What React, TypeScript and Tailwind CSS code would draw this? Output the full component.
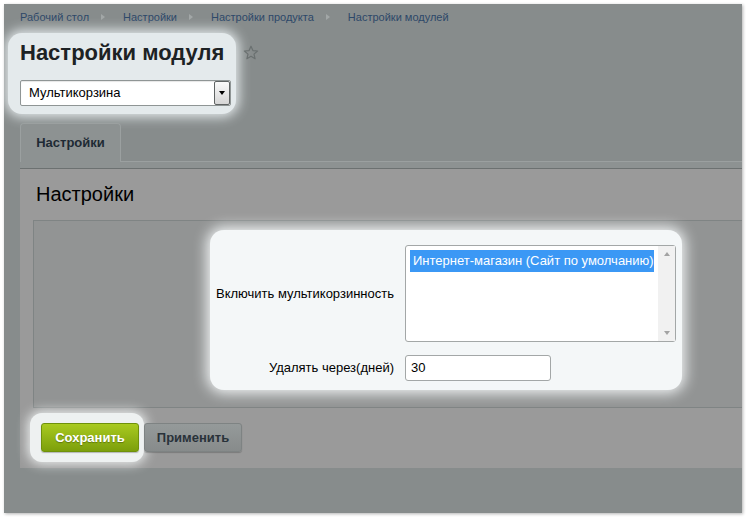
const crumbs = ['Рабочий стол', 'Настройки', 'Настройки продукта', 'Настройки модулей'];

const CrumbArrow = () => (
    <span className="ml-[12px] mr-[18px] inline-block h-0 w-0 border-y-[3.5px] border-l-[4px] border-y-transparent border-l-[#a2a7a7]" />
);

export default function App() {
    return (
        <div className="w-[747px] h-[517px] bg-white pt-[4px] pl-[4px] font-['Liberation_Sans',Arial,sans-serif]">
            <div className="w-[738px] h-[509px] bg-[#878c8c] shadow-[1px_1px_3px_rgba(0,0,0,0.3)] overflow-hidden">
                {/* breadcrumbs */}
                <div className="mt-[3px] h-[20px] pl-[16px] flex items-center text-[11px] text-[#2d4869]">
                    {crumbs.map((c, i) => (
                        <span key={c} className="flex items-center">
                            {c}
                            {i < crumbs.length - 1 && <CrumbArrow />}
                        </span>
                    ))}
                </div>

                {/* title + module select */}
                <div className="mt-[6px] pl-[4px] flex items-start">
                    <div className="w-[228px] pl-[12px] pt-[7px] pb-[8px] rounded-[14px] bg-[#e4eaec] shadow-[0_0_12px_3px_#e4eaec]">
                        <h1 className="text-[22px] leading-[26px] font-bold text-[#1d2224] whitespace-nowrap">Настройки модуля</h1>
                        <div className="mt-[14px] w-[211px] h-[26px] flex items-center bg-white border border-[#8f9595] rounded-[2px] shadow-[inset_0_1px_1px_rgba(0,0,0,0.1)]">
                            <span className="flex-1 pl-[8px] text-[13px] text-black">Мультикорзина</span>
                            <span className="w-[16px] h-[24px] flex items-center justify-center border border-[#5f6363] rounded-[2px] bg-linear-to-b from-[#fafafa] to-[#d6d6d6]">
                                <span className="inline-block h-0 w-0 border-x-[3.5px] border-t-[4px] border-x-transparent border-t-black" />
                            </span>
                        </div>
                    </div>
                    <svg className="ml-[7px] mt-[12px]" width="16" height="16" viewBox="0 0 16 16">
                        <polygon
                            points="8,1.2 9.9,5.6 14.6,6 11,9.1 12.1,13.8 8,11.3 3.9,13.8 5,9.1 1.4,6 6.1,5.6"
                            fill="none"
                            stroke="#6a7070"
                            strokeWidth="1.2"
                            strokeLinejoin="round"
                        />
                    </svg>
                </div>

                {/* tabs */}
                <div className="mt-[9px] pl-[16px] flex">
                    <div className="w-[101px] h-[39px] flex items-center justify-center rounded-t-[4px] border border-b-0 border-[#9ba0a0] bg-[#8d9292] text-[13px] font-bold text-[#1e2a34]">
                        Настройки
                    </div>
                    <div className="flex-1 border-b border-[#9ba0a0]" />
                </div>
                <div className="ml-[16px] h-[7px] bg-[#8d9292] border-b border-[#6c7171]" />

                {/* card */}
                <div className="ml-[16px] h-[299px] bg-[#9a9a9a] pt-[13px]">
                    <h2 className="pl-[16px] text-[20px] leading-[24px] text-black">Настройки</h2>
                    <div className="ml-[13px] mt-[14px] h-[188px] border-l border-t border-b border-[#7f8484] bg-[#929494]">
                        <div className="ml-[176px] mt-[9px] w-[472px] h-[160px] pt-[15px] rounded-[14px] bg-[#f4f7f8] shadow-[0_0_14px_3px_#f4f7f8]">
                            <div className="flex items-center">
                                <div className="w-[184px] text-right text-[13px] text-black">Включить мультикорзинность</div>
                                <div className="ml-[11px] w-[271px] h-[97px] flex bg-white border border-[#a3a7a7] rounded-[3px] pl-[4px] pt-[4px]">
                                    <div className="w-[244px] h-[22px] bg-[#3b98f5] pl-[3px] text-[13px] leading-[22px] text-white whitespace-nowrap">
                                        Интернет-магазин (Сайт по умолчанию)
                                    </div>
                                    <div className="ml-auto -mt-[4px] w-[17px] h-[95px] bg-[#f1f1f1] flex flex-col items-center justify-between py-[6px]">
                                        <span className="inline-block h-0 w-0 border-x-[3.5px] border-b-[4px] border-x-transparent border-b-[#a3a3a3]" />
                                        <span className="inline-block h-0 w-0 border-x-[3.5px] border-t-[4px] border-x-transparent border-t-[#a3a3a3]" />
                                    </div>
                                </div>
                            </div>
                            <div className="mt-[13px] flex items-center">
                                <div className="w-[184px] text-right text-[13px] text-black">Удалять через(дней)</div>
                                <div className="ml-[11px] w-[146px] h-[26px] flex items-center pl-[5px] bg-white border border-[#a3a7a7] rounded-[3px] text-[13px] text-black">
                                    30
                                </div>
                            </div>
                        </div>
                    </div>

                    {/* footer buttons */}
                    <div className="pl-[10px] pt-[5px] flex items-start">
                        <div className="pl-[11px] pr-[5px] py-[10px] rounded-[12px] bg-[#eef1f1] shadow-[0_0_12px_2px_#eef1f1]">
                            <button className="w-[98px] h-[29px] rounded-[3px] border border-[#6f910a] bg-linear-to-b from-[#a9ca1f] to-[#7c9f0b] text-[13px] font-bold text-white [text-shadow:0_1px_1px_rgba(0,0,0,0.3)] shadow-[0_1px_1px_rgba(0,0,0,0.25)]">
                                Сохранить
                            </button>
                        </div>
                        <button className="mt-[10px] w-[98px] h-[29px] rounded-[3px] border border-[#7e8383] bg-linear-to-b from-[#959a9a] to-[#878b8b] text-[13px] font-bold text-[#29323a] shadow-[0_1px_1px_rgba(0,0,0,0.2)]">
                            Применить
                        </button>
                    </div>
                </div>
            </div>
        </div>
    );
}
